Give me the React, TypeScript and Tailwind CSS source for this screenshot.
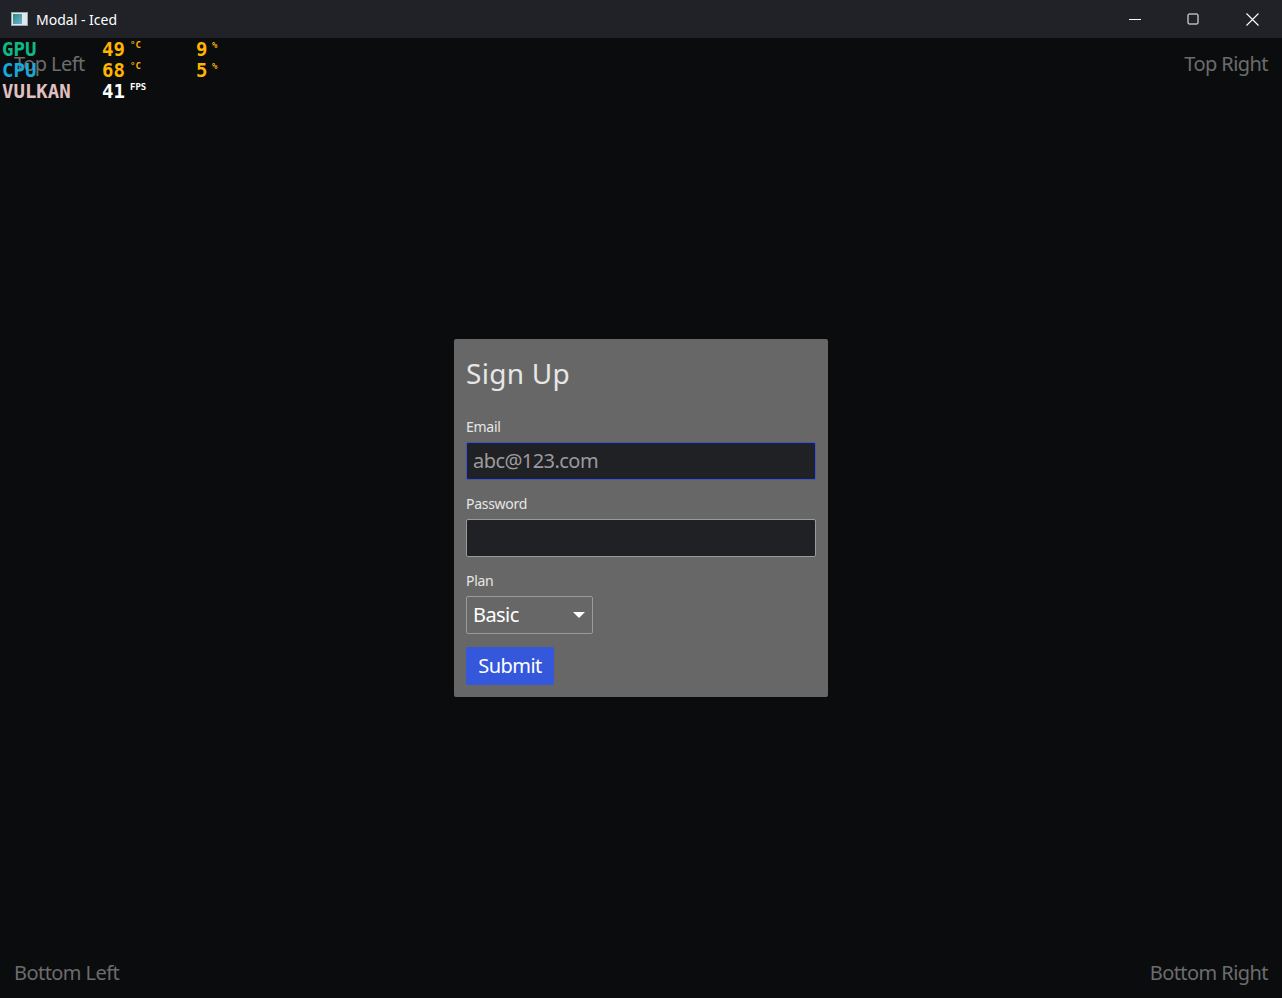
const ui = { fontFamily: '"Noto Sans", "Open Sans", sans-serif' };
const osd = { fontFamily: '"DejaVu Sans Mono", monospace' };

function Field({ label, children }: { label: string; children: React.ReactNode }) {
	return (
		<div className="flex flex-col gap-[6px]">
			<span className="text-[14px] leading-[18px] tracking-[-0.02em] text-[#e6e6e6]">{label}</span>
			{children}
		</div>
	);
}

export default function App() {
	return (
		<div className="flex h-[998px] w-[1282px] flex-col overflow-hidden bg-[#0b0c0e]" style={ui}>
			{/* TITLE BAR */}
			<div className="flex h-[38px] items-center bg-[#202228]">
				<div className="ml-[11px] flex h-[14px] w-[17px] items-center border border-[#9aa7b0] bg-[#dfe8ea] p-[1px]">
					<div className="h-full w-[9px] bg-gradient-to-br from-[#2f8a7a] to-[#6fb0d8]" />
				</div>
				<span className="ml-[8px] text-[14px] text-white">Modal - Iced</span>
				<div className="ml-auto flex h-full items-center">
					<div className="flex w-[58px] justify-center">
						<svg width="12" height="12" viewBox="0 0 12 12">
							<path d="M0 6.5h12" stroke="white" strokeWidth="1" />
						</svg>
					</div>
					<div className="flex w-[58px] justify-center">
						<svg width="12" height="12" viewBox="0 0 12 12">
							<rect x="1" y="1" width="10" height="10" rx="1" fill="none" stroke="white" strokeWidth="1" />
						</svg>
					</div>
					<div className="flex w-[60px] justify-center">
						<svg width="13" height="13" viewBox="0 0 13 13">
							<path d="M0.5 0.5l12 12M12.5 0.5l-12 12" stroke="white" strokeWidth="1.1" />
						</svg>
					</div>
				</div>
			</div>

			{/* CONTENT */}
			<div className="relative flex flex-1 flex-col px-[14px] tracking-[-0.035em]">
				<div className="flex justify-between pt-[12px] text-[20px] leading-[28px] text-[#6b6c6d]">
					<span>Top Left</span>
					<span>Top Right</span>
				</div>

				<div className="flex flex-1 items-center justify-center pb-[2px]">
					<div className="flex w-[374px] flex-col rounded-[2px] bg-[#666766] p-[12px]">
						<h1 className="mb-[23px] text-[28px] leading-[44px] tracking-[0.01em] text-[#e6e6e6]">Sign Up</h1>
						<div className="flex flex-col gap-[15px]">
							<Field label="Email">
								<div className="flex h-[38px] items-center rounded-[2px] border border-[#3a56d6] bg-[#202125] px-[6px] text-[20px] text-[#9b9b9c]">
									abc@123.com
								</div>
							</Field>
							<Field label="Password">
								<div className="h-[38px] rounded-[2px] border border-[#9a9a9a] bg-[#202125]" />
							</Field>
							<Field label="Plan">
								<div className="flex h-[38px] w-[127px] items-center justify-between rounded-[2px] border border-[#9a9a9a] px-[6px] text-[20px] text-white">
									<span>Basic</span>
									<svg width="12" height="8" viewBox="0 0 12 8" className="mr-[1px]">
										<path d="M0 1h12L6 7z" fill="white" />
									</svg>
								</div>
							</Field>
							<div className="mt-[-2px] flex h-[38px] w-[88px] items-center justify-center rounded-[2px] bg-[#3457dc] text-[20px] text-white">
								Submit
							</div>
						</div>
					</div>
				</div>

				<div className="flex justify-between pb-[11px] text-[20px] leading-[28px] text-[#6b6c6d]">
					<span>Bottom Left</span>
					<span>Bottom Right</span>
				</div>

				{/* OSD overlay */}
				<div className="absolute left-[2px] top-[1px] flex flex-col text-[19px] font-bold leading-[21px] tracking-normal" style={osd}>
					{[
						{ name: "GPU", color: "text-[#0fb887]", a: "49", au: "°C", b: "9", bu: "%" },
						{ name: "CPU", color: "text-[#1aa7d9]", a: "68", au: "°C", b: "5", bu: "%" },
						{ name: "VULKAN", color: "text-[#e0c0c0]", a: "41", au: "FPS", b: "", bu: "", white: true },
					].map((r) => (
						<div key={r.name} className="flex items-start">
							<span className={`w-[100px] ${r.color}`}>{r.name}</span>
							<span className={`w-[24px] ${r.white ? "text-white" : "text-[#ffb400]"}`}>{r.a}</span>
							<span className={`ml-[4px] w-[66px] text-[9px] leading-[12px] ${r.white ? "text-white" : "text-[#ffb400]"}`}>{r.au}</span>
							<span className="w-[12px] text-[#ffb400]">{r.b}</span>
							<span className="ml-[4px] text-[9px] leading-[12px] text-[#ffb400]">{r.bu}</span>
						</div>
					))}
				</div>
			</div>
		</div>
	);
}
